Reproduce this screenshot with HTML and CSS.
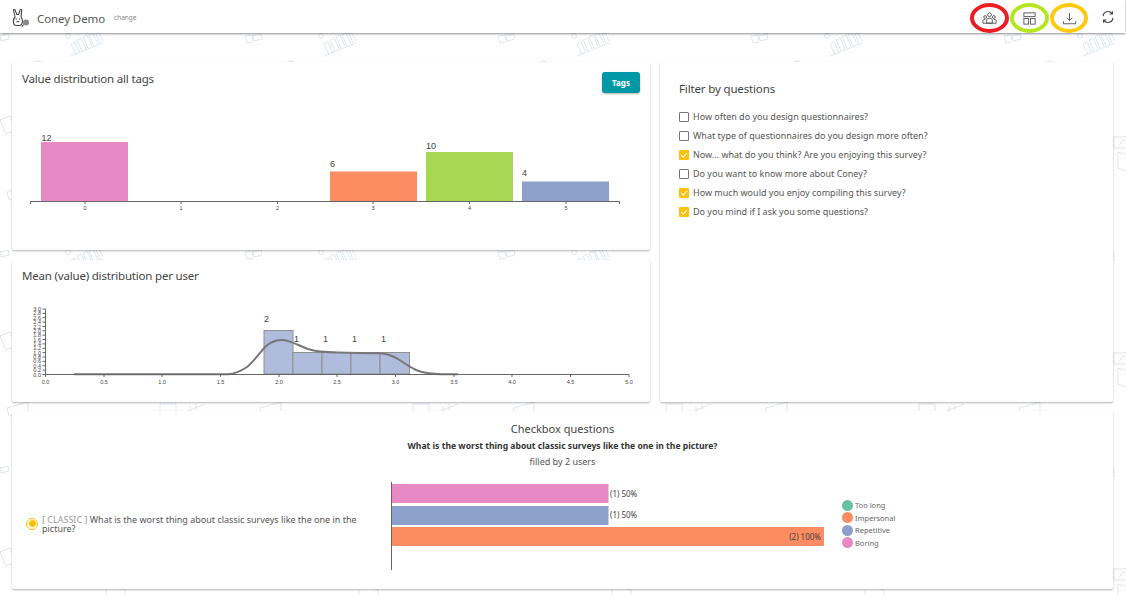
FILE: index.html
```html
<!DOCTYPE html>
<html lang="en">
<head>
<meta charset="utf-8">
<title>Coney Demo</title>
<link rel="stylesheet" href="styles.css">
</head>
<body>
<header class="topbar">
  <div class="brand">
    <svg class="logo" viewBox="0 0 18 18" width="18" height="18">
      <path class="logo-line" d="M3 8 L1.600 1.500 Q1.400 0 2.800 .4 L4.800 5.500 H6.600 L8.200 .6 Q9.600 -.2 9.800 1.200 L9 8 Q10.800 10 10.400 13 Q10 16.500 7 16.500 H4.500 Q1.400 16.500 1.400 12.500 Q1.400 9.500 3 8 Z"/>
      <circle class="logo-dot" cx="4.200" cy="10" r=".7"/>
      <circle class="logo-dot" cx="7.600" cy="10" r=".7"/>
      <path class="logo-line" d="M4.500 12.600 H7.200"/>
      <circle class="logo-ball" cx="14" cy="13.600" r="3"/>
      <path class="logo-line" d="M11.600 15.600 L9.600 17.500"/>
    </svg>
    <span class="app-name">Coney Demo</span>
    <span class="change">change</span>
  </div>
  <nav class="actions">
    <span class="action ring-red">
      <svg viewBox="0 0 16 16" width="15" height="15"><circle class="ico" cx="8" cy="4" r="2"/><circle class="ico" cx="3.400" cy="6.400" r="1.500"/><circle class="ico" cx="12.600" cy="6.400" r="1.500"/><path class="ico" d="M5 13V9.600Q5 7.600 8 7.600T11 9.600V13ZM1 13V10Q1 8.800 3.400 8.800M15 13V10Q15 8.800 12.600 8.800M1 13H15"/></svg>
    </span>
    <span class="action ring-green">
      <svg viewBox="0 0 16 16" width="15" height="15"><rect class="ico" x="2" y="2" width="12" height="4"/><rect class="ico" x="2" y="8" width="5" height="6"/><rect class="ico" x="9" y="8" width="5" height="6"/></svg>
    </span>
    <span class="action ring-amber">
      <svg viewBox="0 0 16 16" width="15" height="15"><path class="ico" d="M8 2V10M5 7.200L8 10.200L11 7.200M1.500 11V13.600H14.500V11"/></svg>
    </span>
    <span class="action plain">
      <svg viewBox="0 0 16 16" width="14" height="14"><path class="ico-strong" d="M2.400 7A5.600 5.600 0 0 1 12.600 4.200M13.600 9A5.600 5.600 0 0 1 3.400 11.800M13 1.400V4.600H9.800M3 14.600V11.400H6.200"/></svg>
    </span>
  </nav>
</header>

<main class="dashboard">
  <section class="card card-value">
    <div class="card-head">
      <h2 class="card-title">Value distribution all tags</h2>
      <button class="tags-btn">Tags</button>
    </div>
    <svg class="chart" width="638" height="150" viewBox="0 0 638 150">
      <rect x="29" y="42" width="87" height="59.500" fill="#e78ac3"/>
      <rect x="318" y="71.500" width="87" height="30" fill="#fc8d62"/>
      <rect x="414" y="52" width="87" height="49.500" fill="#a6d854"/>
      <rect x="510" y="81.500" width="87" height="20" fill="#8da0cb"/>
      <path class="axis" d="M18.500 104V101.500H607.500V104M73 101.500V104M169 101.500V104M265.500 101.500V104M361 101.500V104M457.500 101.500V104M554 101.500V104"/>
      <g class="tick-label">
        <text x="73" y="110">0</text><text x="169" y="110">1</text><text x="265.500" y="110">2</text>
        <text x="361" y="110">3</text><text x="457.500" y="110">4</text><text x="554" y="110">5</text>
      </g>
      <g class="bar-label">
        <text x="29.500" y="41">12</text><text x="318" y="67">6</text><text x="414" y="49">10</text><text x="510" y="76">4</text>
      </g>
    </svg>
  </section>

  <section class="card card-filter">
    <h2 class="filter-title">Filter by questions</h2>
    <ul class="filter-list">
      <li class="filter-item"><span class="box"></span>How often do you design questionnaires?</li>
      <li class="filter-item"><span class="box"></span>What type of questionnaires do you design more often?</li>
      <li class="filter-item"><span class="box checked"><svg viewBox="0 0 10 10" width="10" height="10"><path class="tick" d="M2.200 5.200L4.200 7.200L8 3"/></svg></span>Now... what do you think? Are you enjoying this survey?</li>
      <li class="filter-item"><span class="box"></span>Do you want to know more about Coney?</li>
      <li class="filter-item"><span class="box checked"><svg viewBox="0 0 10 10" width="10" height="10"><path class="tick" d="M2.200 5.200L4.200 7.200L8 3"/></svg></span>How much would you enjoy compiling this survey?</li>
      <li class="filter-item"><span class="box checked"><svg viewBox="0 0 10 10" width="10" height="10"><path class="tick" d="M2.200 5.200L4.200 7.200L8 3"/></svg></span>Do you mind if I ask you some questions?</li>
    </ul>
  </section>

  <section class="card card-mean">
    <h2 class="card-title mean-title">Mean (value) distribution per user</h2>
    <svg class="chart" width="638" height="108" viewBox="0 0 638 108">
      <g class="hist">
        <rect x="252" y="36.500" width="29" height="43.500"/>
        <rect x="281" y="58.500" width="29" height="21.500"/>
        <rect x="310" y="58.500" width="29" height="21.500"/>
        <rect x="339" y="58.500" width="29" height="21.500"/>
        <rect x="368" y="58.500" width="29.500" height="21.500"/>
      </g>
      <path class="density" d="M62 80.200H216C224 80 229 77 235 73C241 68 247 60 253 53C259 47.500 264 45.500 271 46C278 46.500 288 52 296 55C305 58 314 58.300 326 58.500C340 58.700 355 58.800 368 59.200C376 59.800 381 62 386 65C392 69 398 73 404 76C411 79 418 80 430 80.200H446"/>
      <path class="axis" d="M33.500 15H30.500M33.500 15V80.500M33.500 80.500H617M33.500 80.500V83M92 80.500V83M150 80.500V83M208.500 80.500V83M267 80.500V83M325 80.500V83M383.500 80.500V83M442 80.500V83M500 80.500V83M558.500 80.500V83M617 80.500V83"/>
      <path class="axis" d="M33.500 19.400H30.500M33.500 23.700H30.500M33.500 28.100H30.500M33.500 32.500H30.500M33.500 36.800H30.500M33.500 41.200H30.500M33.500 45.500H30.500M33.500 49.900H30.500M33.500 54.300H30.500M33.500 58.600H30.500M33.500 63H30.500M33.500 67.400H30.500M33.500 71.700H30.500M33.500 76.100H30.500M33.500 80.500H30.500"/>
      <g class="tick-label">
        <text x="33.500" y="89.500">0.0</text><text x="92" y="89.500">0.5</text><text x="150" y="89.500">1.0</text><text x="208.500" y="89.500">1.5</text><text x="267" y="89.500">2.0</text><text x="325" y="89.500">2.5</text><text x="383.500" y="89.500">3.0</text><text x="442" y="89.500">3.5</text><text x="500" y="89.500">4.0</text><text x="558.500" y="89.500">4.5</text><text x="617" y="89.500">5.0</text>
      </g>
      <g class="tick-label tick-left">
        <text x="29" y="17">3.0</text><text x="29" y="21.400">2.8</text><text x="29" y="25.700">2.6</text><text x="29" y="30.100">2.4</text><text x="29" y="34.500">2.2</text><text x="29" y="38.800">2.0</text><text x="29" y="43.200">1.8</text><text x="29" y="47.500">1.6</text><text x="29" y="51.900">1.4</text><text x="29" y="56.300">1.2</text><text x="29" y="60.600">1.0</text><text x="29" y="65">0.8</text><text x="29" y="69.400">0.6</text><text x="29" y="73.700">0.4</text><text x="29" y="78.100">0.2</text><text x="29" y="82.500">0.0</text>
      </g>
      <g class="bar-label">
        <text x="252" y="28">2</text><text x="282" y="48">1</text><text x="311" y="48">1</text><text x="340" y="48">1</text><text x="369" y="48">1</text>
      </g>
    </svg>
  </section>

  <section class="card card-check">
    <div class="check-head">
      <h2 class="check-title">Checkbox questions</h2>
      <p class="check-question">What is the worst thing about classic surveys like the one in the picture?</p>
      <p class="check-count">filled by 2 users</p>
    </div>
    <div class="check-body">
      <div class="question-pick">
        <span class="radio"></span>
        <p class="question-text"><span class="tag">[ CLASSIC ]</span> What is the worst thing about classic surveys like the one in the picture?</p>
      </div>
      <svg class="chart hbar" width="440" height="92" viewBox="0 0 440 92">
        <rect x="1" y="3" width="216.500" height="19" fill="#e78ac3"/>
        <rect x="1" y="25" width="216.500" height="19" fill="#8da0cb"/>
        <rect x="1" y="46" width="432" height="19" fill="#fc8d62"/>
        <path class="axis" d="M.5 1V89"/>
        <text class="hbar-label" x="219" y="16">(1) 50%</text>
        <text class="hbar-label" x="219" y="37">(1) 50%</text>
        <text class="hbar-label hbar-end" x="430" y="59">(2) 100%</text>
      </svg>
      <ul class="legend">
        <li class="legend-item"><span class="dot dot-teal"></span>Too long</li>
        <li class="legend-item"><span class="dot dot-orange"></span>Impersonal</li>
        <li class="legend-item"><span class="dot dot-blue"></span>Repetitive</li>
        <li class="legend-item"><span class="dot dot-pink"></span>Boring</li>
      </ul>
    </div>
  </section>
</main>
</body>
</html>
```

FILE: styles.css
```css
* { box-sizing: border-box; }

html, body { height: 100%; }

body {
  margin: 0;
  overflow: hidden;
  color: #444;
  font-family: "Noto Sans", "Open Sans", sans-serif;
  background-color: #fff;
  background-image: url("data:image/svg+xml,%3Csvg xmlns='http://www.w3.org/2000/svg' width='253' height='216' viewBox='0 0 253 216'%3E%3Cg fill='none' stroke='%23dde5ee' stroke-width='1'%3E%3Cpath d='M76 55L71 44L75 42L80 53M82 51L77 40L81 38L86 49M88 48L83 37L87 35L92 46M94 46L89 35L93 33L98 44M100 43L96 34L99 33L103 41M71 56L103 43'/%3E%3Ccircle cx='68' cy='36' r='2.500'/%3E%3Cpath d='M245 36L261 34L262 40L247 43Z'/%3E%3Ccircle cx='254' cy='38' r='2'/%3E%3Cpath d='M0 36L8 34L9 39L1 41Z'/%3E%3Ccircle cx='38' cy='66' r='5'/%3E%3Cpath d='M102 137H125V148H102ZM107 146L112 139L117 146M106 152L125 158V175L106 168Z'/%3E%3Cpath d='M160 188H176V198H160ZM185 196L205 188M190 196V190M196 194V188'/%3E%3Cpath d='M7 192L28 186V196L9 200Z'/%3E%3Cpath d='M0 120L10 116L16 130L6 134Z'/%3E%3C/g%3E%3C/svg%3E");
  background-position: 0 0;
}

.topbar {
  display: flex;
  align-items: center;
  justify-content: space-between;
  height: 33px;
  margin-right: 1px;
  padding: 0 4px 0 12px;
  background: #fff;
  box-shadow: 0 1px 2px rgba(0, 0, 0, .45);
}

.brand { display: flex; align-items: center; padding-top: 2px; }

.logo { display: block; margin-right: 7px; }

.logo-line { fill: none; stroke: #444; stroke-width: 1.100; }

.logo-dot { fill: #444; }

.logo-ball { fill: #888; }

.app-name {
  margin-top: 2px;
  font-size: 11.500px;
  letter-spacing: -.1px;
  color: #555;
}

.change {
  margin: -1px 0 0 9px;
  font-size: 6.500px;
  color: #888;
}

.actions { display: flex; align-items: center; }

.action {
  display: flex;
  align-items: center;
  justify-content: center;
  width: 39px;
  height: 30px;
  margin-top: 3px;
  margin-right: 1px;
  border: 4px solid transparent;
  border-radius: 50%;
}

.ring-red { border-color: #ed1c24; }

.ring-green { border-color: #b5e61d; }

.ring-amber { border-color: #ffc90e; width: 38px; }

.plain {
  width: 26px;
  margin-top: 0;
  margin-left: 6px;
  margin-right: 0;
}

.ico { fill: none; stroke: #555; stroke-width: 1; }

.ico-strong { fill: none; stroke: #444; stroke-width: 1.300; }

.dashboard {
  display: grid;
  grid-template-columns: 638px 453px;
  grid-template-rows: 188px 142px 178px;
  column-gap: 10px;
  row-gap: 10px;
  padding: 29px 0 0 12px;
}

.card {
  background: #fff;
  border-radius: 2px;
  box-shadow: 0 1px 2px rgba(0, 0, 0, .3);
}

.card-value { grid-column: 1; grid-row: 1; }

.card-mean { grid-column: 1; grid-row: 2; }

.card-filter { grid-column: 2; grid-row: 1 / span 2; padding: 18px 19px; }

.card-check { grid-column: 1 / span 2; grid-row: 3; margin-top: -1px; height: 178px; }

.card-head {
  display: flex;
  justify-content: space-between;
  align-items: flex-start;
  height: 38px;
  padding: 10px 10px 0;
}

.card-title {
  margin: 0;
  padding-bottom: 2px;
  font-size: 11.500px;
  font-weight: 400;
  line-height: 13px;
  letter-spacing: -.19px;
  color: #444;
}

.mean-title { height: 34px; padding: 9px 10px 0; }

.tags-btn {
  width: 38px;
  height: 21px;
  padding: 0;
  border: 0;
  border-radius: 3px;
  background: #0097a7;
  color: #fff;
  font: 700 8px "Noto Sans", sans-serif;
  box-shadow: 0 1px 2px rgba(0, 0, 0, .3);
}

.chart { display: block; }

.axis { fill: none; stroke: #666; stroke-width: 1; }

.tick-label text {
  font: 5.500px "Liberation Sans", sans-serif;
  fill: #444;
  text-anchor: middle;
}

.tick-left text { text-anchor: end; }

.bar-label text {
  font: 9px "Liberation Sans", sans-serif;
  fill: #444;
}

.hist rect { fill: #afbcdb; stroke: #8f8f8f; stroke-width: 1; }

.density { fill: none; stroke: #777; stroke-width: 2; }

.filter-title {
  margin: 0 0 10px;
  font-size: 11.500px;
  font-weight: 400;
  line-height: 17px;
  letter-spacing: -.15px;
  color: #444;
}

.filter-list { margin: 0; padding: 0; list-style: none; }

.filter-item {
  display: flex;
  align-items: center;
  height: 19px;
  font-size: 9px;
  color: #555;
}

.box {
  flex: none;
  width: 10px;
  height: 10px;
  margin-right: 4px;
  border: 1px solid #777;
  border-radius: 1px;
}

.checked { border: 0; background: #ffc107; }

.checked svg { display: block; }

.tick { fill: none; stroke: #fff; stroke-width: 1.100; }

.check-head { padding-top: 10px; text-align: center; }

.check-title {
  margin: 0;
  font-size: 11px;
  font-weight: 400;
  line-height: 16px;
  color: #444;
}

.check-question {
  margin: 1px 0 0;
  font-size: 8.600px;
  font-weight: 700;
  line-height: 16px;
  color: #333;
}

.check-count {
  margin: 0;
  font-size: 9px;
  line-height: 16px;
  color: #555;
}

.check-body { display: flex; align-items: flex-start; margin-top: 11px; }

.question-pick {
  display: flex;
  align-items: center;
  width: 379px;
  height: 92px;
  padding: 0 20px 7px 14px;
}

.radio {
  position: relative;
  flex: none;
  width: 12px;
  height: 12px;
  margin: 0 4px 0 0;
  border: 1.500px solid #ffc107;
  border-radius: 50%;
}

.radio::after {
  content: "";
  position: absolute;
  inset: 1.500px;
  border-radius: 50%;
  background: #ffc107;
}

.question-text {
  margin: 0;
  font-size: 9px;
  line-height: 9px;
  color: #555;
}

.tag { color: #999; }

.hbar-label { font: 8px "Noto Sans", sans-serif; fill: #444; }

.hbar-end { text-anchor: end; }

.legend {
  margin: 18px 0 0 11px;
  padding: 0;
  list-style: none;
}

.legend-item {
  display: flex;
  align-items: center;
  height: 12.500px;
  font-size: 7.500px;
  color: #666;
}

.dot {
  width: 11px;
  height: 11px;
  margin-right: 2px;
  border-radius: 50%;
}

.dot-teal { background: #66c2a5; }

.dot-orange { background: #fc8d62; }

.dot-blue { background: #8da0cb; }

.dot-pink { background: #e78ac3; }
```
